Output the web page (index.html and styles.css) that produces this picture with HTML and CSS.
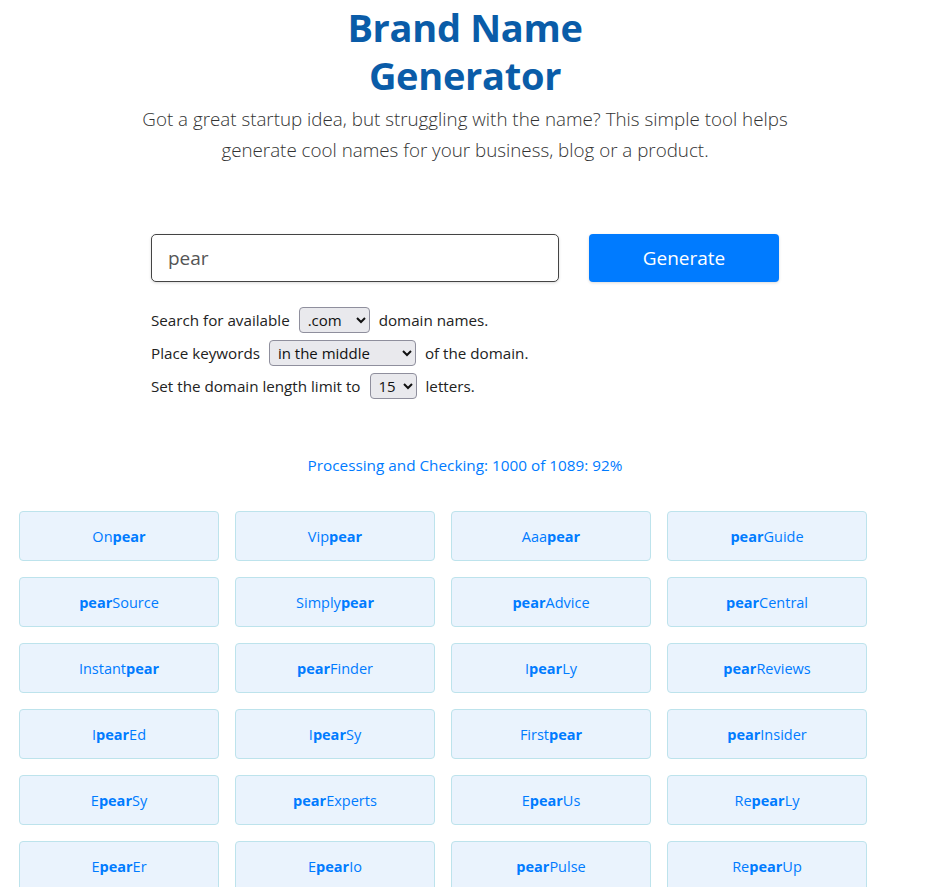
FILE: index.html
```html
<!DOCTYPE html>
<html>
<head>
<meta charset="utf-8">
<link rel="stylesheet" href="styles.css">
</head>
<body>
<header class="hero">
  <h1 class="title">Brand Name<br>Generator</h1>
  <p class="lead">Got a great startup idea, but struggling with the name? This simple tool helps generate cool names for your business, blog or a product.</p>
</header>
<section class="form">
  <div class="search-row">
    <input class="keyword" type="text" value="pear">
    <button class="generate">Generate</button>
  </div>
  <div class="options">
    <div class="opt">Search for available <select class="sel sel-tld"><option>.com</option></select> domain names.</div>
    <div class="opt">Place keywords <select class="sel sel-pos"><option>in the middle</option></select> of the domain.</div>
    <div class="opt">Set the domain length limit to <select class="sel sel-len"><option>15</option></select> letters.</div>
  </div>
</section>
<p class="status">Processing and Checking: 1000 of 1089: 92%</p>
<div class="results">
  <div class="name">On<b>pear</b></div>
  <div class="name">Vip<b>pear</b></div>
  <div class="name">Aaa<b>pear</b></div>
  <div class="name"><b>pear</b>Guide</div>
  <div class="name"><b>pear</b>Source</div>
  <div class="name">Simply<b>pear</b></div>
  <div class="name"><b>pear</b>Advice</div>
  <div class="name"><b>pear</b>Central</div>
  <div class="name">Instant<b>pear</b></div>
  <div class="name"><b>pear</b>Finder</div>
  <div class="name">I<b>pear</b>Ly</div>
  <div class="name"><b>pear</b>Reviews</div>
  <div class="name">I<b>pear</b>Ed</div>
  <div class="name">I<b>pear</b>Sy</div>
  <div class="name">First<b>pear</b></div>
  <div class="name"><b>pear</b>Insider</div>
  <div class="name">E<b>pear</b>Sy</div>
  <div class="name"><b>pear</b>Experts</div>
  <div class="name">E<b>pear</b>Us</div>
  <div class="name">Re<b>pear</b>Ly</div>
  <div class="name">E<b>pear</b>Er</div>
  <div class="name">E<b>pear</b>Io</div>
  <div class="name"><b>pear</b>Pulse</div>
  <div class="name">Re<b>pear</b>Up</div>
</div>
</body>
</html>
```
FILE: styles.css
```css
* { box-sizing: border-box; }
body {
  margin: 0;
  font-family: "Open Sans", "Noto Sans", sans-serif;
  color: #212529;
  background: #fff;
}
.hero {
  text-align: center;
  padding-top: 3px;
}
.title {
  margin: 0;
  font-size: 38px;
  line-height: 48px;
  font-weight: 700;
  color: #0a5ca8;
  letter-spacing: -0.3px;
}
.lead {
  margin: 5px auto 0;
  width: 680px;
  font-size: 18.8px;
  line-height: 31px;
  font-weight: 300;
  color: #333;
}
.form {
  width: 628px;
  margin: 68px auto 0;
}
.search-row {
  display: flex;
  gap: 30px;
}
.keyword {
  width: 408px;
  height: 48px;
  border: 1px solid #444;
  border-radius: 5px;
  padding: 0 16px;
  font-family: inherit;
  font-size: 19px;
  color: #555;
  box-shadow: 0 1px 3px rgba(0,0,0,0.15);
  outline: none;
}
.generate {
  width: 190px;
  height: 48px;
  border: 0;
  border-radius: 4px;
  background: #007bff;
  color: #fff;
  font-family: inherit;
  font-size: 19px;
  box-shadow: 0 1px 3px rgba(0,0,0,0.15);
}
.options {
  margin-top: 25px;
  display: flex;
  flex-direction: column;
  gap: 7px;
}
.opt {
  display: flex;
  align-items: center;
  gap: 6px;
  font-size: 15.2px;
  height: 26px;
  color: #222;
}
.sel {
  height: 26px;
  font-family: inherit;
  font-size: 15px;
  color: #111;
  background: #e9e9ed;
  border: 1px solid #8f8f9d;
  border-radius: 4px;
  padding: 0 2px 0 4px;
  margin: 0 3px;
}
.sel-tld { width: 71px; }
.sel-pos { width: 147px; }
.sel-len { width: 47px; }
.status {
  margin: 56px 0 0;
  text-align: center;
  font-size: 15.3px;
  line-height: 20px;
  color: #007bff;
}
.results {
  margin-top: 36px;
  padding-left: 19px;
  display: grid;
  grid-template-columns: repeat(4, 200px);
  gap: 16px;
}
.name {
  height: 50px;
  display: flex;
  align-items: center;
  justify-content: center;
  background: #eaf3fd;
  border: 1px solid #bde3ec;
  border-radius: 4px;
  color: #007bff;
  font-size: 14.5px;
}
.name b { font-weight: 700; }
```
